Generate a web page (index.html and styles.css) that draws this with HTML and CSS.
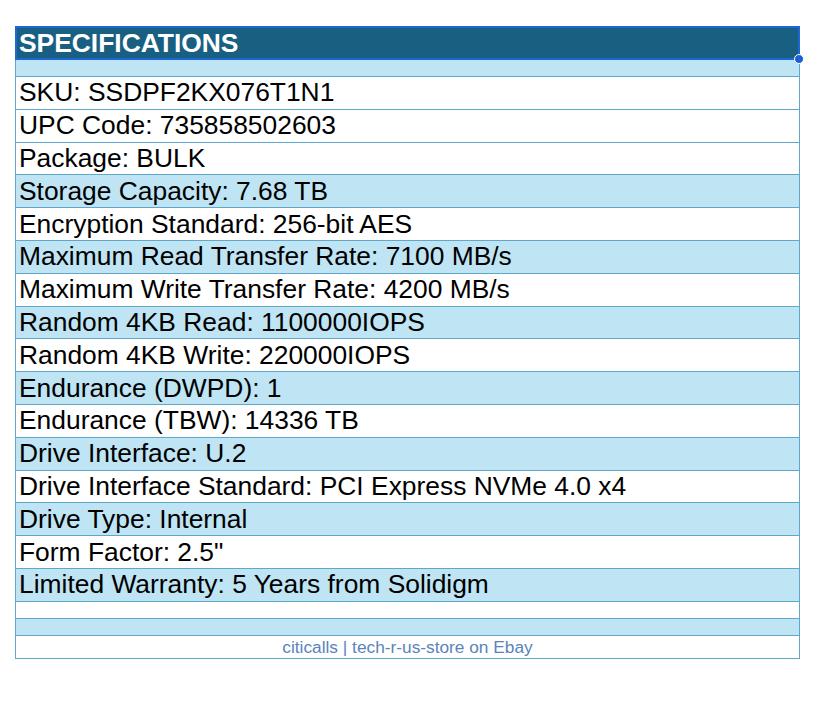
FILE: index.html
```html
<!DOCTYPE html>
<html>
<head>
<meta charset="utf-8">
<link rel="stylesheet" href="styles.css">
</head>
<body>
<div class="wrap">
<table class="spec">
  <tr><th class="head">SPECIFICATIONS<span class="sel"></span><span class="dot"></span></th></tr>
  <tr class="blue thin"><td></td></tr>
  <tr><td>SKU: SSDPF2KX076T1N1</td></tr>
  <tr><td>UPC Code: 735858502603</td></tr>
  <tr><td>Package: BULK</td></tr>
  <tr class="blue"><td>Storage Capacity: 7.68 TB</td></tr>
  <tr><td>Encryption Standard: 256-bit AES</td></tr>
  <tr class="blue"><td>Maximum Read Transfer Rate: 7100 MB/s</td></tr>
  <tr><td>Maximum Write Transfer Rate: 4200 MB/s</td></tr>
  <tr class="blue"><td>Random 4KB Read: 1100000IOPS</td></tr>
  <tr><td>Random 4KB Write: 220000IOPS</td></tr>
  <tr class="blue"><td>Endurance (DWPD): 1</td></tr>
  <tr><td>Endurance (TBW): 14336 TB</td></tr>
  <tr class="blue"><td>Drive Interface: U.2</td></tr>
  <tr><td>Drive Interface Standard: PCI Express NVMe 4.0 x4</td></tr>
  <tr class="blue"><td>Drive Type: Internal</td></tr>
  <tr><td>Form Factor: 2.5"</td></tr>
  <tr class="blue"><td>Limited Warranty: 5 Years from Solidigm</td></tr>
  <tr class="thin"><td></td></tr>
  <tr class="blue thin"><td></td></tr>
  <tr class="foot"><td>citicalls | tech-r-us-store on Ebay</td></tr>
</table>
</div>
</body>
</html>
```
FILE: styles.css
```css
html, body {
  margin: 0;
  padding: 0;
  background: #ffffff;
}
.wrap {
  padding: 26px 0 0 15px;
}
.spec {
  border-collapse: collapse;
  width: 785px;
  font-family: "Liberation Sans", Arial, sans-serif;
  color: #000;
}
.spec td {
  border: 1px solid #5fa7cc;
  height: 32.8px;
  padding: 0 3px;
  font-size: 26.4px;
  line-height: 31px;
  box-sizing: border-box;
  white-space: nowrap;
}
.spec .head {
  position: relative;
  height: 32px;
  background: #195f82;
  color: #ffffff;
  font-weight: bold;
  font-size: 26.4px;
  text-align: left;
  padding: 0 3px;
  border: 1px solid #195f82;
  line-height: 31px;
}
.sel {
  position: absolute;
  left: -1px;
  top: -1px;
  right: -1px;
  bottom: -1px;
  border: 2px solid #1c66d6;
  pointer-events: none;
}
.dot {
  position: absolute;
  right: -5px;
  bottom: -5px;
  width: 8px;
  height: 8px;
  border-radius: 50%;
  background: #1c5fd6;
  border: 1px solid #ffffff;
}
.blue td {
  background: #bfe4f4;
}
.thin td {
  height: 17px;
  line-height: 16px;
}
.foot td {
  height: 23px;
  font-size: 17.3px;
  line-height: 20px;
  text-align: center;
  color: #5a84ba;
}
```
